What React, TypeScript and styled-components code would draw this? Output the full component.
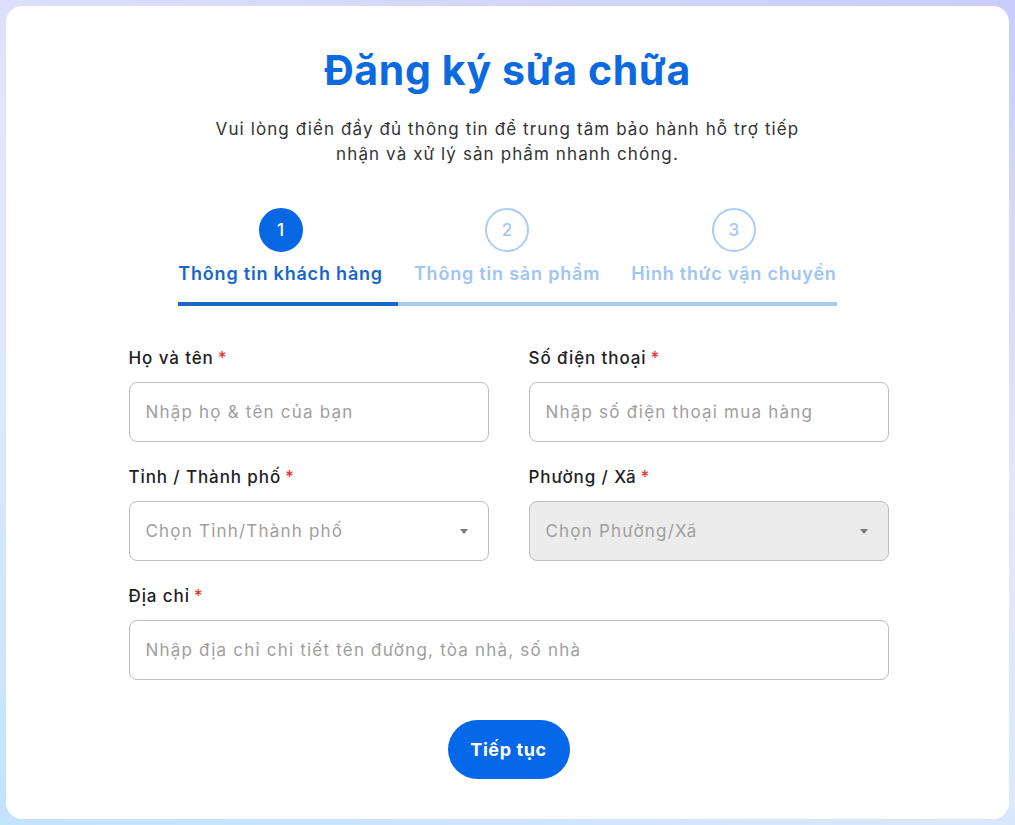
import styled, { createGlobalStyle } from 'styled-components';

const GlobalStyle = createGlobalStyle`
  html, body {
    margin: 0;
    padding: 0;
  }
  body {
    font-family: Inter, "Noto Sans", "Liberation Sans", sans-serif;
    min-height: 825px;
  }
  * {
    box-sizing: border-box;
  }
`;

const Page = styled.div`
  padding: 6px;
  min-height: 825px;
  background: linear-gradient(20deg, #c3e3fb 0%, #dde8fb 35%, #e2e5fb 60%, #c8cdfb 100%);
`;

const Card = styled.main`
  background: #ffffff;
  border-radius: 16px;
  min-height: 813px;
  padding: 40px 0 40px;
  display: flex;
  flex-direction: column;
  align-items: center;
`;

const Title = styled.h1`
  margin: 0;
  font-size: 41px;
  line-height: 48px;
  font-weight: 700;
  color: #0b6ae0;
  letter-spacing: 0.6px;
`;

const Subtitle = styled.p`
  margin: 23px 0 0;
  font-size: 17px;
  line-height: 25px;
  color: #333333;
  text-align: center;
  letter-spacing: 1.1px;
`;

const Steps = styled.div`
  margin-top: 41px;
  display: flex;
  flex-direction: column;
  align-items: stretch;
`;

const StepRow = styled.div`
  display: flex;
  gap: 31px;
`;

const Step = styled.div`
  display: flex;
  flex-direction: column;
  align-items: center;
  gap: 10px;
`;

const Circle = styled.div<{ $active?: boolean }>`
  width: 44px;
  height: 44px;
  border-radius: 50%;
  display: flex;
  align-items: center;
  justify-content: center;
  font-size: 17px;
  font-weight: 500;
  color: ${(p) => (p.$active ? '#ffffff' : '#a3c7f1')};
  background: ${(p) => (p.$active ? '#0868e3' : '#ffffff')};
  border: 2px solid ${(p) => (p.$active ? '#0868e3' : '#abcdf3')};
`;

const StepLabel = styled.div<{ $active?: boolean }>`
  font-size: 18px;
  line-height: 24px;
  font-weight: 600;
  letter-spacing: 0.8px;
  white-space: nowrap;
  color: ${(p) => (p.$active ? '#1767c8' : '#a0c5f0')};
`;

const Track = styled.div`
  margin-top: 16px;
  height: 4px;
  background: #a8cbf0;
`;

const Fill = styled.div`
  height: 100%;
  background: #1a66c4;
`;

const FormArea = styled.div`
  padding-left: 2px;
`;

const Form = styled.form`
  margin-top: 40px;
  width: 760px;
  display: grid;
  grid-template-columns: 1fr 1fr;
  column-gap: 40px;
  row-gap: 23px;
`;

const Field = styled.div<{ $wide?: boolean }>`
  display: flex;
  flex-direction: column;
  gap: 12px;
  grid-column: ${(p) => (p.$wide ? '1 / -1' : 'auto')};
`;

const Label = styled.label`
  font-size: 17px;
  line-height: 24px;
  font-weight: 500;
  letter-spacing: 0.9px;
  color: #222222;
`;

const Star = styled.span`
  color: #e53935;
  margin-left: 4px;
`;

const Input = styled.input`
  height: 60px;
  width: 100%;
  border: 1px solid #bdbdbd;
  border-radius: 8px;
  padding: 0 16px;
  font-family: inherit;
  font-size: 17px;
  letter-spacing: 1.2px;
  color: #222;
  background: #fff;
  outline: none;
  &::placeholder {
    color: #9e9e9e;
  }
`;

const SelectBox = styled.div<{ $disabled?: boolean }>`
  height: 60px;
  border: 1px solid #bdbdbd;
  border-radius: 8px;
  padding: 0 16px;
  display: flex;
  align-items: center;
  justify-content: space-between;
  font-size: 17px;
  letter-spacing: 1.2px;
  color: #9e9e9e;
  background: ${(p) => (p.$disabled ? '#ececec' : '#ffffff')};
`;

const Caret = styled.span`
  width: 0;
  height: 0;
  margin-right: 4px;
  border-left: 4.5px solid transparent;
  border-right: 4.5px solid transparent;
  border-top: 5px solid #7a7a7a;
`;

const Actions = styled.div`
  margin-top: 40px;
  display: flex;
  justify-content: center;
`;

const Button = styled.button`
  width: 122px;
  height: 59px;
  border: none;
  border-radius: 30px;
  background: #0568e8;
  color: #ffffff;
  font-family: inherit;
  font-size: 18px;
  font-weight: 700;
  letter-spacing: 0.6px;
  cursor: pointer;
`;

const steps = ['Thông tin khách hàng', 'Thông tin sản phẩm', 'Hình thức vận chuyển'];

export default function App() {
  const current = 0;
  return (
    <>
      <GlobalStyle />
      <Page>
        <Card>
          <Title>Đăng ký sửa chữa</Title>
          <Subtitle>
            Vui lòng điền đầy đủ thông tin để trung tâm bảo hành hỗ trợ tiếp
            <br />
            nhận và xử lý sản phẩm nhanh chóng.
          </Subtitle>
          <Steps>
            <StepRow>
              {steps.map((s, i) => (
                <Step key={s}>
                  <Circle $active={i === current}>{i + 1}</Circle>
                  <StepLabel $active={i === current}>{s}</StepLabel>
                </Step>
              ))}
            </StepRow>
            <Track>
              <Fill style={{ width: `${((current + 1) / steps.length) * 100}%` }} />
            </Track>
          </Steps>
          <FormArea>
            <Form onSubmit={(e) => e.preventDefault()}>
              <Field>
                <Label>
                  Họ và tên<Star>*</Star>
                </Label>
                <Input placeholder="Nhập họ & tên của bạn" />
              </Field>
              <Field>
                <Label>
                  Số điện thoại<Star>*</Star>
                </Label>
                <Input placeholder="Nhập số điện thoại mua hàng" />
              </Field>
              <Field>
                <Label>
                  Tỉnh / Thành phố<Star>*</Star>
                </Label>
                <SelectBox>
                  <span>Chọn Tỉnh/Thành phố</span>
                  <Caret />
                </SelectBox>
              </Field>
              <Field>
                <Label>
                  Phường / Xã<Star>*</Star>
                </Label>
                <SelectBox $disabled>
                  <span>Chọn Phường/Xã</span>
                  <Caret />
                </SelectBox>
              </Field>
              <Field $wide>
                <Label>
                  Địa chỉ<Star>*</Star>
                </Label>
                <Input placeholder="Nhập địa chỉ chi tiết tên đường, tòa nhà, số nhà" />
              </Field>
            </Form>
            <Actions>
              <Button type="button">Tiếp tục</Button>
            </Actions>
          </FormArea>
        </Card>
      </Page>
    </>
  );
}
